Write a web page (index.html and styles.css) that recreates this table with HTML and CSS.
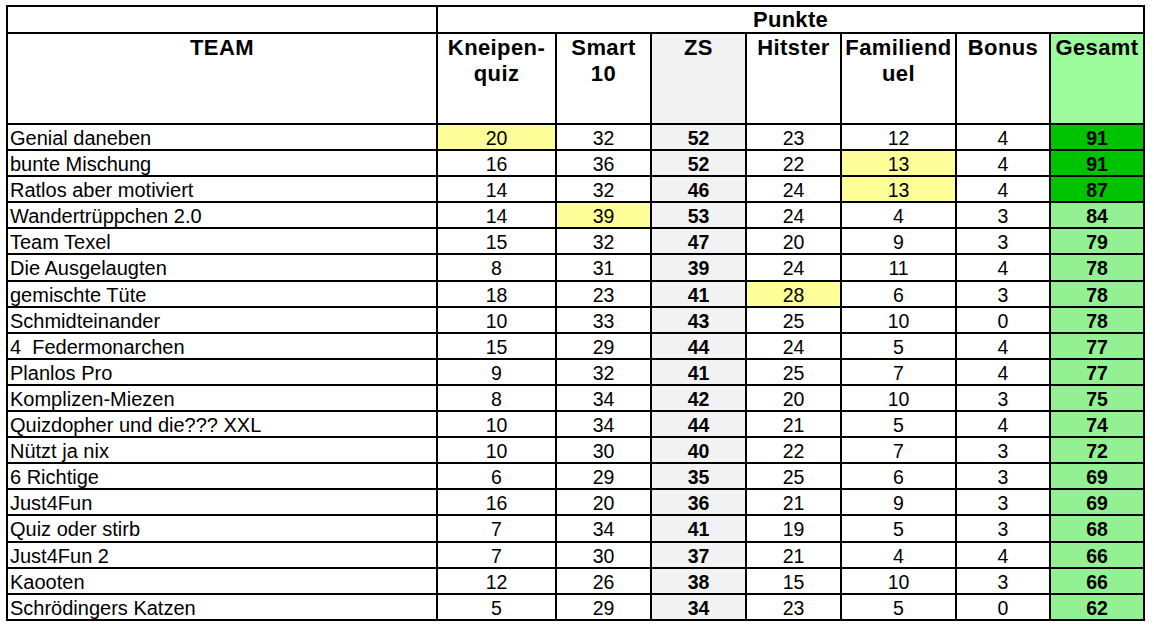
FILE: index.html
```html
<!DOCTYPE html>
<html lang="de">
<head>
<meta charset="utf-8">
<title>Punkte</title>
<link rel="stylesheet" href="styles.css">
</head>
<body>
<div class="sheet">
  <div class="c blank"></div>
  <div class="c punkte">Punkte</div>

  <div class="c h team-h">TEAM</div>
  <div class="c h">Kneipen-<br>quiz</div>
  <div class="c h">Smart<br>10</div>
  <div class="c h zs">ZS</div>
  <div class="c h">Hitster</div>
  <div class="c h">Familiend<br>uel</div>
  <div class="c h">Bonus</div>
  <div class="c h total-h">Gesamt</div>

  <div class="c name">Genial daneben</div><div class="c n hl">20</div><div class="c n">32</div><div class="c n zs b">52</div><div class="c n">23</div><div class="c n">12</div><div class="c n">4</div><div class="c n b top">91</div>
  <div class="c name">bunte Mischung</div><div class="c n">16</div><div class="c n">36</div><div class="c n zs b">52</div><div class="c n">22</div><div class="c n hl">13</div><div class="c n">4</div><div class="c n b top">91</div>
  <div class="c name">Ratlos aber motiviert</div><div class="c n">14</div><div class="c n">32</div><div class="c n zs b">46</div><div class="c n">24</div><div class="c n hl">13</div><div class="c n">4</div><div class="c n b top">87</div>
  <div class="c name">Wandertrüppchen 2.0</div><div class="c n">14</div><div class="c n hl">39</div><div class="c n zs b">53</div><div class="c n">24</div><div class="c n">4</div><div class="c n">3</div><div class="c n b tot">84</div>
  <div class="c name">Team Texel</div><div class="c n">15</div><div class="c n">32</div><div class="c n zs b">47</div><div class="c n">20</div><div class="c n">9</div><div class="c n">3</div><div class="c n b tot">79</div>
  <div class="c name">Die Ausgelaugten</div><div class="c n">8</div><div class="c n">31</div><div class="c n zs b">39</div><div class="c n">24</div><div class="c n">11</div><div class="c n">4</div><div class="c n b tot">78</div>
  <div class="c name">gemischte Tüte</div><div class="c n">18</div><div class="c n">23</div><div class="c n zs b">41</div><div class="c n hl">28</div><div class="c n">6</div><div class="c n">3</div><div class="c n b tot">78</div>
  <div class="c name">Schmidteinander</div><div class="c n">10</div><div class="c n">33</div><div class="c n zs b">43</div><div class="c n">25</div><div class="c n">10</div><div class="c n">0</div><div class="c n b tot">78</div>
  <div class="c name">4&nbsp; Federmonarchen</div><div class="c n">15</div><div class="c n">29</div><div class="c n zs b">44</div><div class="c n">24</div><div class="c n">5</div><div class="c n">4</div><div class="c n b tot">77</div>
  <div class="c name">Planlos Pro</div><div class="c n">9</div><div class="c n">32</div><div class="c n zs b">41</div><div class="c n">25</div><div class="c n">7</div><div class="c n">4</div><div class="c n b tot">77</div>
  <div class="c name">Komplizen-Miezen</div><div class="c n">8</div><div class="c n">34</div><div class="c n zs b">42</div><div class="c n">20</div><div class="c n">10</div><div class="c n">3</div><div class="c n b tot">75</div>
  <div class="c name">Quizdopher und die??? XXL</div><div class="c n">10</div><div class="c n">34</div><div class="c n zs b">44</div><div class="c n">21</div><div class="c n">5</div><div class="c n">4</div><div class="c n b tot">74</div>
  <div class="c name">Nützt ja nix</div><div class="c n">10</div><div class="c n">30</div><div class="c n zs b">40</div><div class="c n">22</div><div class="c n">7</div><div class="c n">3</div><div class="c n b tot">72</div>
  <div class="c name">6 Richtige</div><div class="c n">6</div><div class="c n">29</div><div class="c n zs b">35</div><div class="c n">25</div><div class="c n">6</div><div class="c n">3</div><div class="c n b tot">69</div>
  <div class="c name">Just4Fun</div><div class="c n">16</div><div class="c n">20</div><div class="c n zs b">36</div><div class="c n">21</div><div class="c n">9</div><div class="c n">3</div><div class="c n b tot">69</div>
  <div class="c name">Quiz oder stirb</div><div class="c n">7</div><div class="c n">34</div><div class="c n zs b">41</div><div class="c n">19</div><div class="c n">5</div><div class="c n">3</div><div class="c n b tot">68</div>
  <div class="c name">Just4Fun 2</div><div class="c n">7</div><div class="c n">30</div><div class="c n zs b">37</div><div class="c n">21</div><div class="c n">4</div><div class="c n">4</div><div class="c n b tot">66</div>
  <div class="c name">Kaooten</div><div class="c n">12</div><div class="c n">26</div><div class="c n zs b">38</div><div class="c n">15</div><div class="c n">10</div><div class="c n">3</div><div class="c n b tot">66</div>
  <div class="c name">Schrödingers Katzen</div><div class="c n">5</div><div class="c n">29</div><div class="c n zs b">34</div><div class="c n">23</div><div class="c n">5</div><div class="c n">0</div><div class="c n b tot">62</div>
</div>
</body>
</html>
```

FILE: styles.css
```css
* { box-sizing: border-box; }

html, body {
  margin: 0;
  padding: 0;
  background: #ffffff;
}

body {
  font-family: "Liberation Sans", Arial, sans-serif;
  color: #000000;
}

.sheet {
  margin: 5px 0 0 6px;
  width: 1139px;
  display: grid;
  grid-template-columns: 430px 119px 95px 95px 95px 115px 94px 94px;
  grid-template-rows: 27px 91px;
  grid-auto-rows: 26.1px;
  border-left: 2px solid #000;
  border-top: 2px solid #000;
}

.c {
  border-right: 2px solid #000;
  border-bottom: 2px solid #000;
  overflow: hidden;
  white-space: nowrap;
}

.punkte {
  grid-column: span 7;
  text-align: center;
  font-weight: bold;
  font-size: 22px;
  line-height: 25px;
  letter-spacing: 0.3px;
}

.h {
  text-align: center;
  font-weight: bold;
  font-size: 22px;
  line-height: 26px;
  padding-top: 1px;
  letter-spacing: 0.4px;
}

.name {
  font-size: 20px;
  line-height: 24px;
  padding-top: 1px;
  padding-left: 2px;
}

.n {
  font-size: 19.5px;
  line-height: 24px;
  padding-top: 1px;
  text-align: center;
}

.b { font-weight: bold; }

.zs { background: #f2f2f2; }
.hl { background: #ffff99; }
.total-h { background: #9cfc9c; }
.tot { background: #93f193; }
.top { background: #00c300; }
```
